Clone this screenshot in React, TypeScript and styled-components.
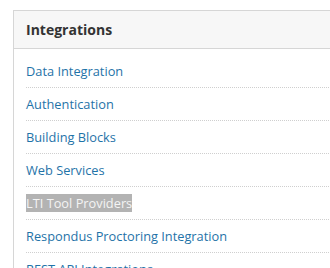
import React from 'react';
import styled, { createGlobalStyle } from 'styled-components';

const GlobalStyle = createGlobalStyle`
  html, body {
    margin: 0;
    padding: 0;
    background: #ffffff;
    overflow: hidden;
  }
  body {
    font-family: 'Open Sans', 'Noto Sans', sans-serif;
  }
`;

const Page = styled.div`
  padding: 10px 0 0 13px;
`;

const Panel = styled.section`
  border: 1px solid #d6d6d6;
  margin-right: -20px;
  background: #ffffff;
`;

const PanelHeader = styled.h2`
  margin: 0;
  height: 37px;
  display: flex;
  align-items: center;
  padding: 0 12px;
  background: #f7f7f7;
  border-bottom: 1px solid #d6d6d6;
  font-size: 14px;
  font-weight: 700;
  color: #333333;
`;

const LinkList = styled.ul`
  list-style: none;
  margin: 0;
  padding: 6px 0 0 12px;
`;

const LinkRow = styled.li`
  height: 32px;
  display: flex;
  align-items: center;
  border-bottom: 1px dotted #cfcfcf;
`;

const NavLink = styled.a<{ $selected?: boolean }>`
  font-size: 12.8px;
  line-height: 18px;
  text-decoration: none;
  color: ${(p) => (p.$selected ? '#f4f4f4' : '#1f73a8')};
  background: ${(p) => (p.$selected ? '#b3b3b3' : 'transparent')};
  cursor: pointer;
`;

const items = [
  'Data Integration',
  'Authentication',
  'Building Blocks',
  'Web Services',
  'LTI Tool Providers',
  'Respondus Proctoring Integration',
  'REST API Integrations',
];

export default function App() {
  return (
    <>
      <GlobalStyle />
      <Page>
        <Panel>
          <PanelHeader>Integrations</PanelHeader>
          <LinkList>
            {items.map((label) => (
              <LinkRow key={label}>
                <NavLink $selected={label === 'LTI Tool Providers'}>{label}</NavLink>
              </LinkRow>
            ))}
          </LinkList>
        </Panel>
      </Page>
    </>
  );
}
